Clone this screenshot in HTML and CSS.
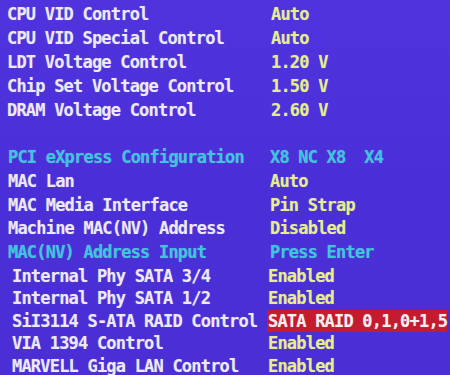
FILE: index.html
```html
<!DOCTYPE html>
<html lang="en">
<head>
    <meta charset="UTF-8">
    <title>Advanced Chipset Features</title>
    <link rel="stylesheet" href="styles.css">
</head>
<body>
    <div class="screen">
        <div class="row"><span class="label">CPU VID Control</span><span class="value">Auto</span></div>
        <div class="row"><span class="label">CPU VID Special Control</span><span class="value">Auto</span></div>
        <div class="row"><span class="label">LDT Voltage Control</span><span class="value">1.20 V</span></div>
        <div class="row"><span class="label">Chip Set Voltage Control</span><span class="value">1.50 V</span></div>
        <div class="row"><span class="label">DRAM Voltage Control</span><span class="value">2.60 V</span></div>
        <div class="row gap"></div>
        <div class="row mid info"><span class="label">PCI eXpress Configuration</span><span class="value">X8 NC X8  X4</span></div>
        <div class="row mid"><span class="label">MAC Lan</span><span class="value">Auto</span></div>
        <div class="row mid"><span class="label">MAC Media Interface</span><span class="value">Pin Strap</span></div>
        <div class="row mid"><span class="label">Machine MAC(NV) Address</span><span class="value">Disabled</span></div>
        <div class="row mid info"><span class="label">MAC(NV) Address Input</span><span class="value">Press Enter</span></div>
        <div class="row low"><span class="label">Internal Phy SATA 3/4</span><span class="value">Enabled</span></div>
        <div class="row low"><span class="label">Internal Phy SATA 1/2</span><span class="value">Enabled</span></div>
        <div class="row low selected"><span class="label">SiI3114 S-ATA RAID Control</span><span class="value">SATA RAID 0,1,0+1,5</span></div>
        <div class="row low"><span class="label">VIA 1394 Control</span><span class="value">Enabled</span></div>
        <div class="row low"><span class="label">MARVELL Giga LAN Control</span><span class="value">Enabled</span></div>
    </div>
</body>
</html>
```

FILE: styles.css
```css
html, body {
    margin: 0;
    padding: 0;
}

body {
    width: 450px;
    height: 375px;
    overflow: hidden;
    background: linear-gradient(180deg, #5033dc 0%, #4a2fd8 50%, #4b2ed4 100%);
    font-family: "DejaVu Sans Mono", monospace;
    font-weight: bold;
    font-size: 17px;
    letter-spacing: -0.8px;
}

.screen {
    padding-top: 1.5px;
}

.row {
    display: grid;
    grid-template-columns: 264px auto;
    height: 24px;
    line-height: 24px;
    padding-left: 7px;
    white-space: pre;
    text-shadow: 0 0 1px rgba(255, 255, 255, 0.35);
}

.gap {
    height: 24.7px;
}

.mid {
    padding-left: 8px;
    grid-template-columns: 262px auto;
    height: 23.7px;
    line-height: 23.7px;
}

.low {
    padding-left: 12px;
    grid-template-columns: 256px auto;
    height: 22.5px;
    line-height: 22.5px;
}

.label {
    color: #ebe9f4;
}

.value {
    color: #e4ee8a;
}

.info .label,
.info .value {
    color: #3ac6dc;
}

.selected .value {
    color: #f4eef0;
    background-color: #c41b2e;
    margin-left: -1px;
    padding-left: 1px;
    margin-right: 3px;
}
```
